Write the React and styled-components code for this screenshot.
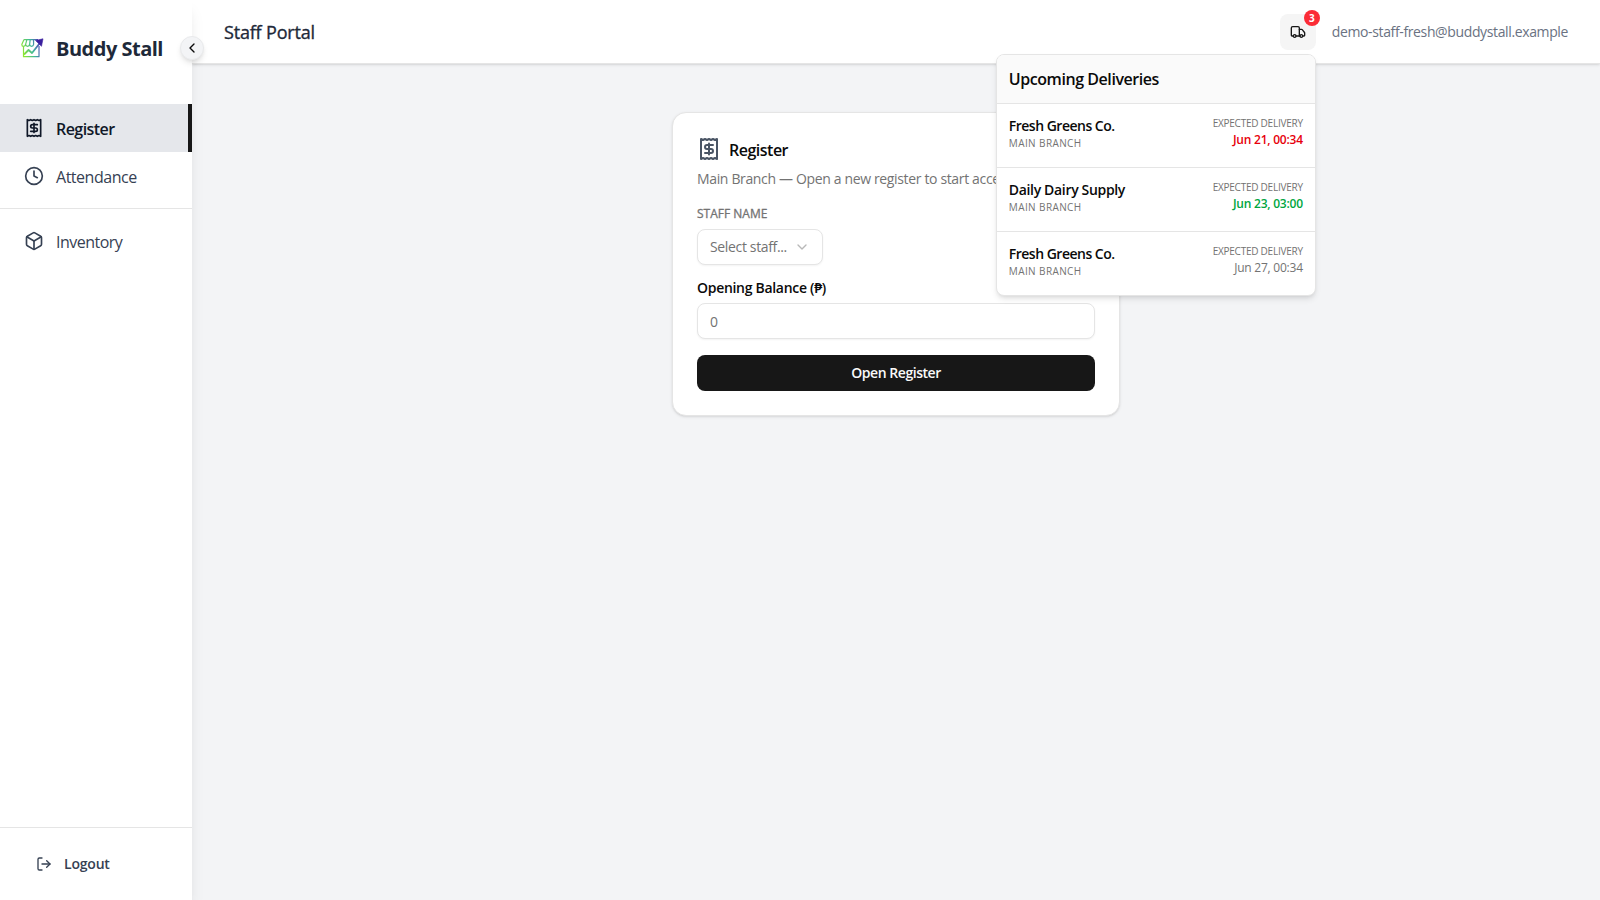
import { useState } from "react"
import styled, { createGlobalStyle } from "styled-components";
import { Receipt, Clock, Box, Truck, ChevronLeft, ChevronDown } from "lucide-react";
import { FiLogOut } from "react-icons/fi";

const GlobalStyle = createGlobalStyle`
  * { box-sizing: border-box; }
  body {
    margin: 0;
    background: #f3f4f6;
    color: #0a0a0a;
    font-family: "Segoe UI", "Open Sans", "Noto Sans", sans-serif;
    font-size: 16px;
  }
  button, input { font-family: inherit; }
`
const Text = styled.span`
  white-space: nowrap;
  letter-spacing: ${p => p.$track || 0}px;
`
const Page = styled.div`
  display: flex;
  height: 100vh;
  overflow: hidden;
`
const Sidebar = styled.aside`
  position: relative;
  z-index: 2;
  display: flex;
  flex-direction: column;
  width: 192px;
  flex-shrink: 0;
  background: white;
  box-shadow: 0 10px 15px -3px rgba(0, 0, 0, 0.1), 0 4px 6px -4px rgba(0, 0, 0, 0.1);
`
const Brand = styled.div`
  display: flex;
  align-items: center;
  gap: 12px;
  height: 96px;
  padding-left: 20px;
  margin-bottom: 8px;
  font-size: 20px;
  font-weight: 700;
  color: #1e2939;
`
const Collapse = styled.button`
  position: absolute;
  top: 36px;
  right: -12px;
  display: flex;
  align-items: center;
  justify-content: center;
  width: 24px;
  height: 24px;
  padding: 0;
  border: 1px solid #e9eaec;
  border-radius: 50%;
  background: #f3f4f6;
  color: #0a0a0a;
  box-shadow: 0 4px 6px -1px rgba(0, 0, 0, 0.1), 0 2px 4px -2px rgba(0, 0, 0, 0.1);
`
const Nav = styled.nav`
  flex: 1;
`
const NavItem = styled.a`
  display: flex;
  align-items: center;
  gap: 12px;
  height: 48px;
  padding-left: 24px;
  color: ${p => p.$active ? "#101828" : "#364153"};
  background: ${p => p.$active ? "#e5e7eb" : "transparent"};
  border-right: ${p => p.$active ? "4px solid #171717" : "none"};
  font-weight: ${p => p.$active ? 600 : 400};
  ${Text} { padding-top: 2px; }
`
const Divider = styled.hr`
  height: 1px;
  margin: 8px 0;
  border: 0;
  background: #e5e5e5;
`
const SidebarFooter = styled.div`
  display: flex;
  align-items: center;
  height: 73px;
  border-top: 1px solid #e5e5e5;
  padding-left: 36px;
`
const Logout = styled.button`
  display: flex;
  align-items: center;
  gap: 12px;
  padding: 0;
  border: none;
  background: none;
  color: #364153;
  font-size: 14px;
  font-weight: 600;
  ${Text} { padding-bottom: 1px; }
`
const Content = styled.div`
  flex: 1;
  display: flex;
  flex-direction: column;
`
const Header = styled.header`
  position: relative;
  z-index: 1;
  display: flex;
  align-items: center;
  justify-content: space-between;
  height: 64px;
  padding: 0 32px;
  background: white;
  border-bottom: 1px solid #e5e5e5;
  box-shadow: 0 1px 3px rgba(0, 0, 0, 0.1), 0 1px 2px -1px rgba(0, 0, 0, 0.1);
`
const HeaderTitle = styled.h1`
  margin: 0;
  font-size: 18px;
  font-weight: 500;
  color: #1e2939;
  -webkit-text-stroke: 0.35px #1e2939;
`
const HeaderRight = styled.div`
  display: flex;
  align-items: center;
  gap: 16px;
  font-size: 14px;
  color: #6a7282;
`
const Deliveries = styled.div`
  position: relative;
`
const TruckButton = styled.button`
  display: flex;
  align-items: center;
  justify-content: center;
  width: 36px;
  height: 36px;
  padding: 0;
  border: none;
  border-radius: 8px;
  background: #f5f5f5;
  color: #171717;
`
const Badge = styled.span`
  position: absolute;
  top: -4px;
  right: -4px;
  width: 16px;
  height: 16px;
  border-radius: 50%;
  background: #fb2c36;
  color: white;
  font-size: 10px;
  font-weight: 700;
  line-height: 16px;
  text-align: center;
`
const Dropdown = styled.div`
  position: absolute;
  top: 40px;
  right: 0;
  width: 320px;
  overflow: hidden;
  border: 1px solid #e5e5e5;
  border-radius: 8px;
  background: white;
  color: #0a0a0a;
  box-shadow: 0 4px 6px -1px rgba(0, 0, 0, 0.1), 0 2px 4px -2px rgba(0, 0, 0, 0.1);
`
const DropdownTitle = styled.div`
  height: 48px;
  padding: 1px 12px 0;
  background: #fafafa;
  font-size: 16px;
  font-weight: 600;
  line-height: 47px;
`
const DeliveryRow = styled.div`
  display: flex;
  justify-content: space-between;
  height: 64px;
  padding: 12px;
  border-top: 1px solid #e5e5e5;
`
const Supplier = styled.div`
  display: flex;
  flex-direction: column;
  font-size: 14px;
  font-weight: 600;
  line-height: 20px;
`
const Expected = styled.div`
  display: flex;
  flex-direction: column;
  align-items: flex-end;
`
const Caption = styled(Text)`
  color: #737373;
  font-size: 10px;
  font-weight: 400;
  line-height: 15px;
  text-transform: uppercase;
`
const DeliveryDate = styled(Text)`
  padding-top: 1px;
  color: ${p => p.$color};
  font-size: 12px;
  font-weight: ${p => p.$bold ? 600 : 400};
  line-height: 16px;
`
const Main = styled.main`
  flex: 1;
  display: flex;
  justify-content: center;
  align-items: flex-start;
  padding: 48px 32px;
`
const Card = styled.section`
  display: flex;
  flex-direction: column;
  width: 448px;
  padding: 24px;
  border: 1px solid #e5e5e5;
  border-radius: 14px;
  background: white;
  box-shadow: 0 1px 3px rgba(0, 0, 0, 0.1), 0 1px 2px -1px rgba(0, 0, 0, 0.1);
`
const CardTitle = styled.h2`
  display: flex;
  align-items: center;
  gap: 8px;
  height: 24px;
  margin: 0;
  font-size: 16px;
  font-weight: 600;
  svg { color: #4a5565; }
  ${Text} { padding-top: 2px; }
`
const Description = styled.p`
  height: 20px;
  margin: 8px 0 16px;
  color: #737373;
  font-size: 14px;
  line-height: 20px;
`
const Label = styled.label`
  height: 14px;
  margin-bottom: 8px;
  font-size: 14px;
  font-weight: 600;
  line-height: 14px;
`
const SmallLabel = styled.label`
  height: 16px;
  margin-bottom: 8px;
  padding-top: 1px;
  color: #737373;
  font-size: 12px;
  font-weight: 500;
  line-height: 16px;
  -webkit-text-stroke: 0.3px #737373;
`
const Select = styled.button`
  display: flex;
  align-items: center;
  justify-content: space-between;
  width: 126px;
  height: 36px;
  margin-bottom: 16px;
  padding: 0 12px;
  border: 1px solid #e5e5e5;
  border-radius: 8px;
  background: white;
  color: #737373;
  font-size: 14px;
  box-shadow: 0 1px 2px rgba(0, 0, 0, 0.05);
  svg { opacity: 0.5; }
  ${Text} { padding-bottom: 1px; }
`
const Input = styled.input`
  width: 100%;
  height: 36px;
  margin-bottom: 16px;
  padding: 0 12px;
  border: 1px solid #e5e5e5;
  border-radius: 8px;
  outline: 0;
  background: white;
  font-size: 14px;
  box-shadow: 0 1px 2px rgba(0, 0, 0, 0.05);
  &::placeholder { color: #737373; }
`
const Button = styled.button`
  width: 100%;
  height: 36px;
  padding: 0 0 2px;
  border: none;
  border-radius: 8px;
  background: #171717;
  color: #fafafa;
  font-size: 14px;
  font-weight: 600;
`

const deliveries = [
  { supplier: "Fresh Greens Co.", track: -0.5, date: "Jun 21, 00:34", color: "#e7000b", bold: true },
  { supplier: "Daily Dairy Supply", track: -0.33, date: "Jun 23, 03:00", color: "#00a63e", bold: true },
  { supplier: "Fresh Greens Co.", track: -0.5, date: "Jun 27, 00:34", color: "#737373", bold: false },
]

function Logo() {
  return (
    <svg width="24" height="24" viewBox="0 0 24 24" fill="none" stroke="url(#brand)" strokeWidth="1.2" strokeLinejoin="round">
      <defs>
        <linearGradient id="brand" x1="2" y1="14" x2="22" y2="8" gradientUnits="userSpaceOnUse">
          <stop offset="0" stopColor="#8fe82e" />
          <stop offset="0.5" stopColor="#3fb89a" />
          <stop offset="1" stopColor="#5b2bc4" />
        </linearGradient>
      </defs>
      <path d="M4 3.6h14M4 3.6L1.8 8.4c0 2.6 3.4 2.6 3.8 0 .3 2.6 3.7 2.6 4 0 .3 2.6 3.7 2.6 4 0M6.9 3.6L5.6 8.4M10.2 3.6L9.6 8.4M13.5 3.6L13.6 8.4" />
      <path d="M3.5 10.500v10.200h15.500V10" />
      <path d="M4 18.500l4.500-4.500 3.500 3 7.500-9.500" strokeWidth="1.800" />
      <path d="M15.500 4.500l7.500-1.700-1.500 7.500z" fill="#3a1f9e" stroke="#3a1f9e" strokeWidth=".6" />
    </svg>
  )
}

export default function App() {
  const [balance, setBalance] = useState("");
  const handleBalance = e => {
    setBalance(e.target.value)
  }
  return (
    <>
      <GlobalStyle />
      <Page>
        <Sidebar>
          <Brand>
            <Logo />
            <Text $track={-0.5}>Buddy Stall</Text>
          </Brand>
          <Collapse><ChevronLeft size={16} /></Collapse>
          <Nav>
            <NavItem $active><Receipt size={20} /><Text $track={-0.55}>Register</Text></NavItem>
            <NavItem><Clock size={20} /><Text $track={-0.48}>Attendance</Text></NavItem>
            <Divider />
            <NavItem><Box size={20} /><Text $track={-0.52}>Inventory</Text></NavItem>
          </Nav>
          <SidebarFooter>
            <Logout><FiLogOut size={16} /><Text $track={-0.2}>Logout</Text></Logout>
          </SidebarFooter>
        </Sidebar>
        <Content>
          <Header>
            <HeaderTitle><Text $track={-0.18}>Staff Portal</Text></HeaderTitle>
            <HeaderRight>
              <Deliveries>
                <TruckButton><Truck size={16} /></TruckButton>
                <Badge>3</Badge>
                <Dropdown>
                  <DropdownTitle><Text $track={-0.44}>Upcoming Deliveries</Text></DropdownTitle>
                  {deliveries.map((d, i) => (
                    <DeliveryRow key={i}>
                      <Supplier>
                        <Text $track={d.track}>{d.supplier}</Text>
                        <Caption $track={0.4}>Main Branch</Caption>
                      </Supplier>
                      <Expected>
                        <Caption $track={-0.24}>Expected Delivery</Caption>
                        <DeliveryDate $color={d.color} $bold={d.bold} $track={-0.23}>{d.date}</DeliveryDate>
                      </Expected>
                    </DeliveryRow>
                  ))}
                </Dropdown>
              </Deliveries>
              <Text $track={-0.37}>demo-staff-fresh@buddystall.example</Text>
            </HeaderRight>
          </Header>
          <Main>
            <Card>
              <CardTitle><Receipt size={24} /><Text $track={-0.5}>Register</Text></CardTitle>
              <Description><Text $track={-0.35}>Main Branch — Open a new register to start accepting orders.</Text></Description>
              <SmallLabel><Text>STAFF NAME</Text></SmallLabel>
              <Select><Text $track={-0.35}>Select staff...</Text><ChevronDown size={16} /></Select>
              <Label><Text $track={-0.3}>Opening Balance (₱)</Text></Label>
              <Input placeholder="0" value={balance} onChange={handleBalance} />
              <Button><Text $track={-0.45}>Open Register</Text></Button>
            </Card>
          </Main>
        </Content>
      </Page>
    </>
  )
}
